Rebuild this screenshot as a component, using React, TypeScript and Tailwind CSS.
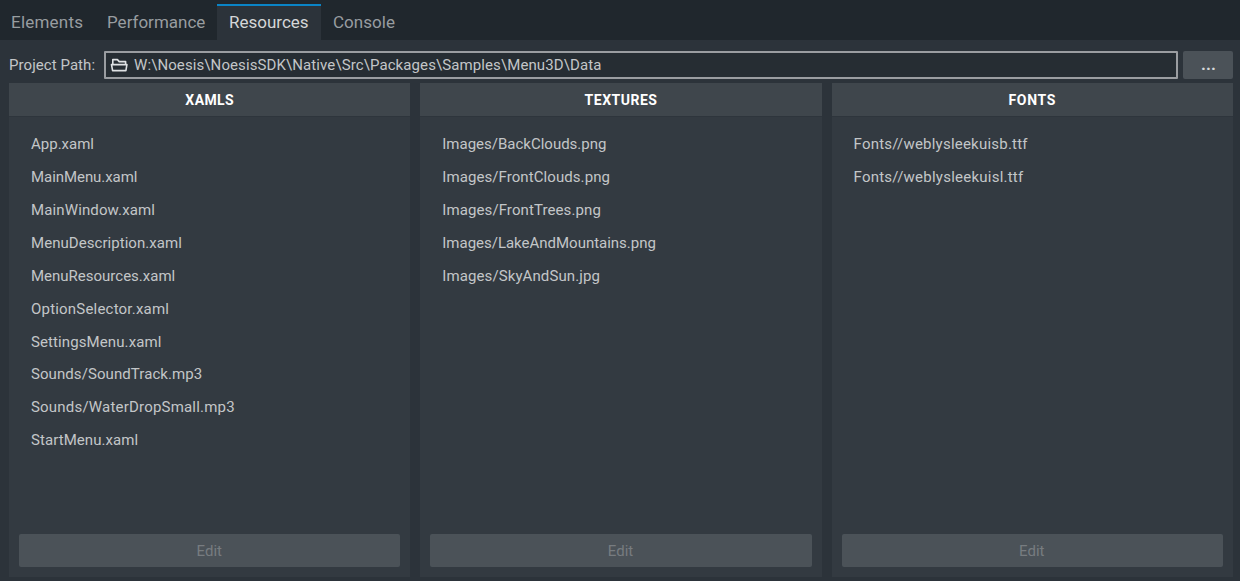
const tabs = [
  { name: "Elements", box: "w-[95px] pl-[11px]", track: "tracking-[0.22px]" },
  { name: "Performance", box: "w-[122px] pl-3", track: "tracking-[0px]" },
  { name: "Resources", box: "w-[104px] pl-3", track: "tracking-[0px]" },
  { name: "Console", box: "w-[86px] pl-3", track: "tracking-[0.05px]" },
];

const panels = [
  {
    title: "XAMLS",
    track: "tracking-[0.4px]",
    items: [
      { name: "App.xaml", track: "tracking-[0px]" },
      { name: "MainMenu.xaml", track: "tracking-[-0.06px]" },
      { name: "MainWindow.xaml", track: "tracking-[0.13px]" },
      { name: "MenuDescription.xaml", track: "tracking-[0.05px]" },
      { name: "MenuResources.xaml", track: "tracking-[0px]" },
      { name: "OptionSelector.xaml", track: "tracking-[0.2px]" },
      { name: "SettingsMenu.xaml", track: "tracking-[0.1px]" },
      { name: "Sounds/SoundTrack.mp3", track: "tracking-[0.08px]" },
      { name: "Sounds/WaterDropSmall.mp3", track: "tracking-[0.2px]" },
      { name: "StartMenu.xaml", track: "tracking-[0.07px]" },
    ],
  },
  {
    title: "TEXTURES",
    track: "tracking-[0.5px]",
    items: [
      { name: "Images/BackClouds.png", track: "tracking-[0px]" },
      { name: "Images/FrontClouds.png", track: "tracking-[0.08px]" },
      { name: "Images/FrontTrees.png", track: "tracking-[0.1px]" },
      { name: "Images/LakeAndMountains.png", track: "tracking-[-0.01px]" },
      { name: "Images/SkyAndSun.jpg", track: "tracking-[0.1px]" },
    ],
  },
  {
    title: "FONTS",
    track: "tracking-[0.7px]",
    items: [
      { name: "Fonts//weblysleekuisb.ttf", track: "tracking-[0.22px]" },
      { name: "Fonts//weblysleekuisl.ttf", track: "tracking-[0.24px]" },
    ],
  },
];

function FolderIcon() {
  return (
    <svg width="18" height="14" viewBox="0 0 18 14" fill="none" stroke="#dfe2e4" strokeWidth="1.6" strokeLinejoin="round">
      <path d="M2.8 6.4V1.6h4.6l1.8 2h6.4v2.8" />
      <path d="M1.5 6.6h15.4l-1 6H2.6z" />
    </svg>
  );
}

export default function App() {
  return (
    <div className="flex h-[581px] w-[1240px] flex-col overflow-hidden bg-[#2c333a] font-['Roboto','Liberation_Sans',sans-serif] text-[15px] text-[#c3c6c8]">
      <nav className="flex h-10 shrink-0 bg-[#20272d] pt-1 text-[17px]">
        {tabs.map((t) => (
          <button
            key={t.name}
            className={`flex h-9 items-center border-t-2 ${t.box} ${t.track} ${
              t.name === "Resources"
                ? "border-[#0a84c6] bg-[#2c333a] text-[#d5d7d8]"
                : "border-transparent text-[#989da0]"
            }`}
          >
            {t.name}
          </button>
        ))}
      </nav>
      <div className="flex h-[43px] shrink-0 items-center pt-[6px] pl-[9px] pr-[7px]">
        <span className="w-[95px] shrink-0 pt-px tracking-[0.06px]">Project Path:</span>
        <div className="flex h-7 w-[1074px] shrink-0 items-center gap-[6px] rounded-[1px] border-2 border-[#9a9da1] bg-[#262d33] pl-1">
          <FolderIcon />
          <span className="pt-px tracking-[0.1px]">W:\Noesis\NoesisSDK\Native\Src\Packages\Samples\Menu3D\Data</span>
        </div>
        <button className="ml-[5px] h-7 w-[50px] rounded-[2px] bg-[#4b5258] pl-px text-[17px] font-bold text-[#d5d7d8]">
          ...
        </button>
      </div>
      <main className="mb-1 grid grow grid-cols-3 gap-[9.8px] pl-[9px] pr-[7px]">
        {panels.map((p) => (
          <section key={p.title} className="flex flex-col bg-[#333a41]">
            <h2
              className={`flex h-[34px] items-center justify-center border-b border-[#2e353c] bg-[#3f464c] pt-[2px] text-[14px] font-bold text-white ${p.track}`}
            >
              {p.title}
            </h2>
            <ul className="grow pt-[11.4px] pl-[22px]">
              {p.items.map((i) => (
                <li key={i.name} className={`h-[32.86px] leading-[33px] ${i.track}`}>
                  {i.name}
                </li>
              ))}
            </ul>
            <button className="mx-[10px] mb-[10px] h-[33px] rounded-[2px] bg-[#4b5258] pt-[2px] pr-px text-[#777c80]">
              Edit
            </button>
          </section>
        ))}
      </main>
    </div>
  );
}
